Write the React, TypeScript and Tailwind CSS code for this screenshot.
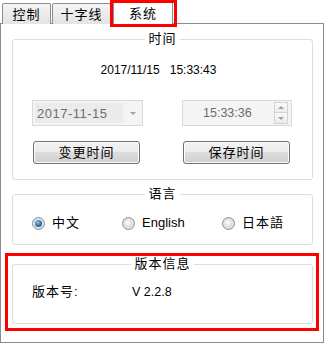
import React from "react";

function Radio({ checked }: { checked?: boolean }) {
  return (
    <span className="relative flex h-[13px] w-[13px] shrink-0 items-center justify-center rounded-full border border-[#8e8f8f] bg-[radial-gradient(circle_at_50%_50%,#f4f4f4_0%,#d4d4d4_100%)]">
      {checked ? (
        <span className="h-[7px] w-[7px] rounded-full bg-[radial-gradient(circle_at_40%_35%,#8cc4f0_0%,#2a6fb0_55%,#164f86_100%)]" />
      ) : (
        <span className="h-[7px] w-[7px] rounded-full bg-[radial-gradient(circle_at_40%_35%,#ffffff_0%,#e2e2e2_60%,#cacaca_100%)]" />
      )}
    </span>
  );
}

export default function App() {
  return (
    <div className="relative h-[345px] w-[327px] overflow-hidden bg-white font-['Liberation_Sans','Noto_Sans_CJK_SC',sans-serif] text-black">
      {/* tab strip */}
      <div className="flex h-[24px] items-end pl-[2px]">
        <div className="flex h-[21px] w-[49px] items-center justify-center rounded-t-[2px] border border-b-0 border-[#898c95] bg-gradient-to-b from-[#f4f4f4] to-[#e4e4e4] text-[13px] leading-none tracking-[1px]">
          控制
        </div>
        <div className="ml-px flex h-[21px] w-[59px] items-center justify-center rounded-t-[2px] border border-b-0 border-[#898c95] bg-gradient-to-b from-[#f4f4f4] to-[#e4e4e4] text-[13px] leading-none tracking-[1px]">
          十字线
        </div>
        <div className="relative z-10 ml-[2px] flex h-[24px] w-[60px] items-center justify-center rounded-t-[2px] border border-b-0 border-[#898c95] bg-white pt-px text-[13px] leading-none tracking-[1px]">
          系统
        </div>
      </div>

      {/* panel */}
      <div className="-mt-px h-[320px] w-[324px] border border-[#898c95] bg-white pl-[11px] pt-[7px]">
        {/* 时间 */}
        <fieldset className="w-[301px] rounded-[3px] border border-[#d5dfe5] pb-[15px]">
          <legend className="mx-auto px-[3px] text-[13px] leading-[16px] tracking-[1px]">时间</legend>
          <div className="mt-[15px] whitespace-pre pr-[8px] text-center text-[12px] leading-[16px]">
            {"2017/11/15   15:33:43"}
          </div>
          <div className="mt-[22px] flex gap-[39px] pl-[19px]">
            <div className="flex h-[26px] w-[111px] items-center border border-[#d9d9d9] bg-[#f4f4f4] pl-[2px]">
              <div className="flex h-[20px] w-[88px] items-center bg-[#ebebeb] pl-[2px] text-[13px] leading-none tracking-[0.5px] text-[#6d6d6d]">
                2017-11-15
              </div>
              <div className="flex flex-1 items-center justify-center pl-[1px]">
                <span className="h-0 w-0 border-x-[3px] border-t-[3px] border-x-transparent border-t-[#a0a0a0]" />
              </div>
            </div>
            <div className="flex h-[26px] w-[110px] items-center border border-[#d9d9d9] bg-[#f4f4f4] pr-[3px]">
              <div className="flex-1 pl-[20px] text-[12.5px] leading-none text-[#6d6d6d]">15:33:36</div>
              <div className="flex h-[22px] w-[14px] flex-col">
                <div className="flex h-[11px] items-center justify-center border border-[#d3d3d3] bg-gradient-to-b from-[#fafafa] to-[#ececec]">
                  <span className="h-0 w-0 border-x-[3px] border-b-[3px] border-x-transparent border-b-[#a0a0a0]" />
                </div>
                <div className="flex h-[11px] items-center justify-center border border-t-0 border-[#d3d3d3] bg-gradient-to-b from-[#fafafa] to-[#ececec]">
                  <span className="h-0 w-0 border-x-[3px] border-t-[3px] border-x-transparent border-t-[#a0a0a0]" />
                </div>
              </div>
            </div>
          </div>
          <div className="mt-[15px] flex gap-[43px] pl-[20px]">
            <button className="flex h-[23px] w-[107px] items-center justify-center rounded-[3px] border border-[#707070] bg-[linear-gradient(to_bottom,#f2f2f2_0%,#ebebeb_50%,#dddddd_50%,#cfcfcf_100%)] text-[13px] leading-none tracking-[1px] shadow-[inset_0_0_0_1px_#fcfcfc]">
              变更时间
            </button>
            <button className="flex h-[23px] w-[107px] items-center justify-center rounded-[3px] border border-[#707070] bg-[linear-gradient(to_bottom,#f2f2f2_0%,#ebebeb_50%,#dddddd_50%,#cfcfcf_100%)] text-[13px] leading-none tracking-[1px] shadow-[inset_0_0_0_1px_#fcfcfc]">
              保存时间
            </button>
          </div>
        </fieldset>

        {/* 语言 */}
        <fieldset className="mt-[6px] w-[301px] rounded-[3px] border border-[#d5dfe5] pb-[13px]">
          <legend className="mx-auto px-[3px] text-[13px] leading-[16px] tracking-[1px]">语言</legend>
          <div className="mt-[13px] flex h-[16px] items-center pl-[19px] text-[13px] leading-[16px]">
            <div className="flex w-[90px] items-center gap-[7px]">
              <Radio checked />
              <span className="tracking-[1px]">中文</span>
            </div>
            <div className="flex w-[100px] items-center gap-[7px]">
              <Radio />
              <span>English</span>
            </div>
            <div className="flex items-center gap-[7px]">
              <Radio />
              <span className="tracking-[1px]">日本語</span>
            </div>
          </div>
        </fieldset>

        {/* 版本信息 */}
        <fieldset className="mt-[11px] w-[301px] rounded-[3px] border border-[#d5dfe5] pb-[23px]">
          <legend className="mx-auto px-[3px] text-[13px] leading-[16px] tracking-[1px]">版本信息</legend>
          <div className="mt-[12px] flex h-[16px] items-center pl-[19px] text-[13px] leading-[16px]">
            <span className="w-[100px] tracking-[1px]">版本号:</span>
            <span className="text-[12.5px]">V 2.2.8</span>
          </div>
        </fieldset>
      </div>

      {/* red annotation boxes */}
      <div className="pointer-events-none absolute left-[110px] top-0 z-20 h-[27px] w-[67px] border-[3px] border-[#ff0000]" />
      <div className="pointer-events-none absolute left-[5px] top-[253px] z-20 h-[78px] w-[314px] border-[3px] border-[#ff0000]" />
    </div>
  );
}
